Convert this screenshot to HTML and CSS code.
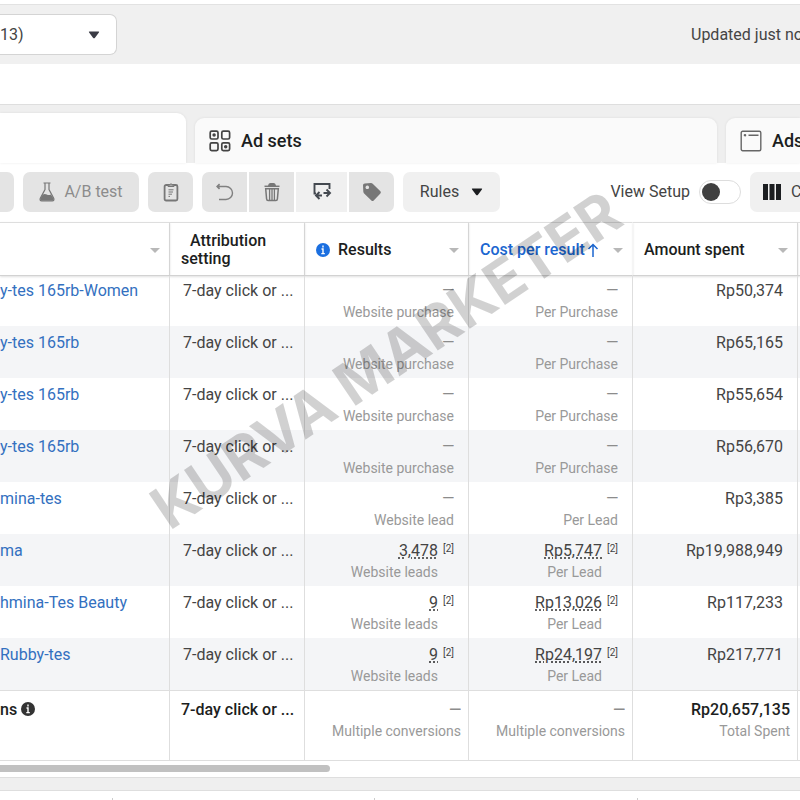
FILE: index.html
```html
<!DOCTYPE html>
<html lang="en">
<head>
	<meta charset="UTF-8">
	<meta name="viewport" content="width=device-width, initial-scale=1">
	<title>Ads Manager</title>
	<link rel="stylesheet" href="styles.css">
</head>
<body>
	<header class="topbar">
		<button class="account" type="button">
			<span>13)</span>
			<svg class="caret" viewBox="0 0 12 8"><path d="M1.500 0.500h9q1.200 0 .4 1L7 6.800q-1 1-2 0L1.100 1.500q-.8-1 .4-1z"/></svg>
		</button>
		<span class="updated">Updated just now</span>
	</header>
	<div class="filterbar"></div>

	<nav class="tabs">
		<a class="tab tab-active" href="#campaigns" aria-label="Campaigns"></a>
		<a class="tab tab-adsets" href="#adsets">
			<svg class="tab-icon" viewBox="0 0 22 22" fill="none" stroke="#444" stroke-width="1.700">
				<rect x="1.200" y="1.200" width="7.800" height="7.800" rx="1.500"/>
				<rect x="12.800" y="1.200" width="7.800" height="7.800" rx="1.500"/>
				<rect x="1.200" y="12.800" width="7.800" height="7.800" rx="1.500"/>
				<rect x="12.800" y="12.800" width="7.800" height="7.800" rx="1.500"/>
				<circle cx="5.100" cy="5.100" r=".9"/>
				<circle cx="16.700" cy="16.700" r=".9"/>
			</svg>
			<span>Ad sets</span>
		</a>
		<a class="tab tab-ads" href="#ads">
			<svg class="tab-icon" viewBox="0 0 22 22" fill="none" stroke="#666" stroke-width="1.400">
				<rect x="1.200" y="1.200" width="19.600" height="19.600" rx="1.500"/>
				<path d="M8.500 5.200h10"/>
				<circle cx="5" cy="5.200" r=".6"/>
			</svg>
			<span>Ads</span>
		</a>
	</nav>

	<div class="toolbar">
		<button class="btn btn-cut" type="button" disabled aria-label="Edit"></button>
		<button class="btn btn-test" type="button" disabled>
			<svg class="icon-flask" viewBox="0 0 16 20">
				<path d="M4.500 1h7M6 1v6.500L1.300 16.200q-.9 2.500 1.500 2.800h10.400q2.400-.3 1.500-2.800L10 7.500V1" fill="none" stroke="#777" stroke-width="1.200"/>
				<path d="M3.800 12.500q2-1.200 4 0t4 0l2.800 4.100q.5 2-1.400 2.200H2.800q-1.900-.2-1.400-2.200z" fill="#777"/>
			</svg>
			<span>A/B test</span>
		</button>
		<button class="btn btn-icon btn-clip" type="button" disabled aria-label="Duplicate">
			<svg viewBox="0 0 20 20" fill="none" stroke="#777" stroke-width="1.800">
				<rect x="3.600" y="3" width="12.800" height="15.500" rx="1.500"/>
				<path d="M7 4.500V3h1.500q1.500-2.600 3 0H13v1.500z" fill="#aaa" stroke-width="1"/>
				<path d="M7.500 7.800h5M7.500 10h4.500M7.500 12.200h3.500M7.500 14.400h1.500" stroke-width="1"/>
			</svg>
		</button>
		<div class="group">
			<button class="btn btn-icon" type="button" disabled aria-label="Undo">
				<svg viewBox="0 0 20 20" fill="none" stroke="#808080" stroke-width="1.400">
					<path d="M4.500 2L2 4.500 4.500 7" fill="#808080"/>
					<path d="M2.500 4.500H11a6.500 6.500 0 0 1 0 13H4"/>
				</svg>
			</button>
			<button class="btn btn-icon" type="button" disabled aria-label="Delete">
				<svg viewBox="0 0 20 20" fill="none" stroke="#777" stroke-width="1.500">
					<path d="M2.500 4.300h15"/>
					<path d="M6 4q.4-3 2.500-3h3q2.100 0 2.500 3z" fill="#777" stroke="none"/>
					<path d="M3.700 6.700l.9 10.300q.1 1.500 1.500 1.500h7.800q1.400 0 1.500-1.500l.9-10.300z"/>
					<path d="M7.600 7v11M10 7v11M12.400 7v11" stroke-width="1.300"/>
				</svg>
			</button>
			<button class="btn btn-icon btn-live" type="button" aria-label="Move">
				<svg viewBox="0 0 20 20" fill="none" stroke="#444950" stroke-width="1.900">
					<path d="M4 11.500H2.500V2h15v5"/>
					<path d="M7.500 10L4 13.500 7.500 17M4 13.500h6M14.500 7.500L18 11l-3.500 3.500M11.500 11H18"/>
				</svg>
			</button>
			<button class="btn btn-icon" type="button" disabled aria-label="Tag">
				<svg viewBox="0 0 20 20" fill="#777">
					<path fill-rule="evenodd" d="M1 3.200Q1 1.500 2.700 1.500L9 1q1 0 1.700.7l7.700 7.600q1 1.100 0 2.200l-6.700 6.900q-1.200 1-2.300 0L1.900 11.200q-.6-.7-.6-1.600zM5.300 3.500a1.800 1.800 0 1 0 .01 0z"/>
				</svg>
			</button>
		</div>
		<button class="btn btn-rules" type="button">
			<span>Rules</span>
			<svg class="caret" viewBox="0 0 12 8"><path d="M1.500 0.500h9q1.200 0 .4 1L7 6.800q-1 1-2 0L1.100 1.500q-.8-1 .4-1z"/></svg>
		</button>
		<label class="setup" for="setup">View Setup</label>
		<input class="switch" id="setup" type="checkbox" role="switch">
		<button class="btn btn-columns" type="button">
			<svg viewBox="0 0 18 16" fill="#1c1e21"><path d="M0 0h5v16H0zM6.500 0h5v16h-5zM13 0h5v16h-5z"/></svg>
			<span>Columns</span>
		</button>
	</div>

	<div class="grid">
		<table class="report">
			<colgroup>
				<col class="col-name">
				<col class="col-attr">
				<col class="col-metric">
				<col class="col-metric">
				<col class="col-spent">
				<col>
			</colgroup>
			<thead>
				<tr>
					<th><div class="head"><i class="sort"></i></div></th>
					<th class="th-attr">Attribution setting</th>
					<th>
						<div class="head head-results">
							<svg class="info" viewBox="0 0 14 14"><circle cx="7" cy="7" r="7" fill="#1b6fe0"/><path d="M7 2.500v2M5.500 6H7v4.500M5.300 10.600h3.500" stroke="#fff" stroke-width="1.400" fill="none"/></svg>
							<span>Results</span>
							<i class="sort"></i>
						</div>
					</th>
					<th class="th-open">
						<div class="head head-cost">
							<span>Cost per result</span>
							<svg class="arrow" viewBox="0 0 12 14" fill="none" stroke="#1b66d0" stroke-width="1.500"><path d="M6 14V1.500M1.500 6L6 1.500 10.500 6"/></svg>
							<i class="sort"></i>
						</div>
					</th>
					<th>
						<div class="head">
							<span>Amount spent</span>
							<i class="sort"></i>
						</div>
					</th>
					<th></th>
				</tr>
			</thead>
			<tbody>
				<tr>
					<td><a href="#c1">y-tes 165rb-Women</a></td>
					<td class="attr">7-day click or ...</td>
					<td class="num"><span class="none">—</span><small>Website purchase</small></td>
					<td class="num"><span class="none">—</span><small>Per Purchase</small></td>
					<td class="num">Rp50,374</td>
					<td></td>
				</tr>
				<tr>
					<td><a href="#c2">y-tes 165rb</a></td>
					<td class="attr">7-day click or ...</td>
					<td class="num"><span class="none">—</span><small>Website purchase</small></td>
					<td class="num"><span class="none">—</span><small>Per Purchase</small></td>
					<td class="num">Rp65,165</td>
					<td></td>
				</tr>
				<tr>
					<td><a href="#c3">y-tes 165rb</a></td>
					<td class="attr">7-day click or ...</td>
					<td class="num"><span class="none">—</span><small>Website purchase</small></td>
					<td class="num"><span class="none">—</span><small>Per Purchase</small></td>
					<td class="num">Rp55,654</td>
					<td></td>
				</tr>
				<tr>
					<td><a href="#c4">y-tes 165rb</a></td>
					<td class="attr">7-day click or ...</td>
					<td class="num"><span class="none">—</span><small>Website purchase</small></td>
					<td class="num"><span class="none">—</span><small>Per Purchase</small></td>
					<td class="num">Rp56,670</td>
					<td></td>
				</tr>
				<tr>
					<td><a href="#c5">mina-tes</a></td>
					<td class="attr">7-day click or ...</td>
					<td class="num"><span class="none">—</span><small>Website lead</small></td>
					<td class="num"><span class="none">—</span><small>Per Lead</small></td>
					<td class="num">Rp3,385</td>
					<td></td>
				</tr>
				<tr>
					<td><a href="#c6">ma</a></td>
					<td class="attr">7-day click or ...</td>
					<td class="num noted"><span class="value">3,478</span><sup>[2]</sup><small>Website leads</small></td>
					<td class="num noted"><span class="value">Rp5,747</span><sup>[2]</sup><small>Per Lead</small></td>
					<td class="num">Rp19,988,949</td>
					<td></td>
				</tr>
				<tr>
					<td><a href="#c7">hmina-Tes Beauty</a></td>
					<td class="attr">7-day click or ...</td>
					<td class="num noted"><span class="value">9</span><sup>[2]</sup><small>Website leads</small></td>
					<td class="num noted"><span class="value">Rp13,026</span><sup>[2]</sup><small>Per Lead</small></td>
					<td class="num">Rp117,233</td>
					<td></td>
				</tr>
				<tr>
					<td><a href="#c8">Rubby-tes</a></td>
					<td class="attr">7-day click or ...</td>
					<td class="num noted"><span class="value">9</span><sup>[2]</sup><small>Website leads</small></td>
					<td class="num noted"><span class="value">Rp24,197</span><sup>[2]</sup><small>Per Lead</small></td>
					<td class="num">Rp217,771</td>
					<td></td>
				</tr>
			</tbody>
			<tfoot>
				<tr>
					<td>ns <svg class="info" viewBox="0 0 14 14"><circle cx="7" cy="7" r="7" fill="#333"/><path d="M7 2.500v2M5.500 6H7v4.500M5.300 10.600h3.500" stroke="#fff" stroke-width="1.400" fill="none"/></svg></td>
					<td>7-day click or ...</td>
					<td class="num"><span class="none">—</span><small>Multiple conversions</small></td>
					<td class="num"><span class="none">—</span><small>Multiple conversions</small></td>
					<td class="num">Rp20,657,135<small>Total Spent</small></td>
					<td></td>
				</tr>
			</tfoot>
		</table>
		<div class="scroll"><div class="thumb"></div></div>
		<div class="watermark">KURVA MARKETER</div>
	</div>

	<div class="divider"></div>
	<div class="panel"><i></i><i></i><i></i></div>
</body>
</html>
```
FILE: styles.css
```css
* {
	box-sizing: border-box;
}
body {
	margin: 0;
	background: #fff;
	color: #444;
	font: 16px/20px Roboto, sans-serif;
	overflow: hidden;
}
a {
	color: #3370c0;
	text-decoration: none;
}
button {
	font: inherit;
	color: inherit;
	border: 0;
	padding: 0;
}
svg {
	display: block;
	flex: none;
}
.caret {
	width: 12px;
	height: 8px;
	fill: #3a3b45;
}

/* top bar */
.topbar {
	display: flex;
	justify-content: space-between;
	align-items: center;
	height: 60px;
	margin-top: 4px;
	border-top: 1px solid #e2e2e2;
	background: #f0f0f0;
	white-space: nowrap;
}
.account {
	display: flex;
	justify-content: space-between;
	align-items: center;
	width: 117px;
	height: 41px;
	padding-right: 16px;
	background: #fff;
	border: 1px solid #d4d4d4;
	border-left: 0;
	border-radius: 0 7px 7px 0;
}
.updated {
	width: 109px;
}
.filterbar {
	height: 41px;
	border-bottom: 1px solid #dedede;
}

/* tabs */
.tabs {
	display: flex;
	align-items: flex-end;
	gap: 9px;
	height: 58px;
	background: #efefef;
}
.tab {
	display: flex;
	align-items: center;
	gap: 10px;
	height: 45px;
	padding-left: 14px;
	background: #fafafa;
	border-radius: 9px 9px 0 0;
	box-shadow: 0 0 3px rgba(0, 0, 0, .08);
	color: #1c1e21;
	font-size: 18px;
	font-weight: 500;
	white-space: nowrap;
}
.tab-active {
	width: 186px;
	height: 50px;
	padding: 0;
	background: #fff;
	border-radius: 0 9px 0 0;
}
.tab-adsets {
	flex: 1;
}
.tab-ads {
	width: 74px;
	border-top-right-radius: 0;
	overflow: hidden;
}
.tab-icon {
	width: 22px;
	height: 22px;
}

/* toolbar */
.toolbar {
	display: flex;
	align-items: center;
	height: 59px;
	padding-bottom: 1px;
	white-space: nowrap;
	overflow: hidden;
}
.btn {
	display: flex;
	align-items: center;
	justify-content: center;
	flex: none;
	height: 40px;
	background: #f0f0f0;
	border-radius: 7px;
}
.btn:disabled {
	background: #e4e4e4;
	color: #8c8c8c;
}
.btn-cut {
	width: 14px;
	margin-right: 9px;
	border-radius: 0 7px 7px 0;
}
.btn-test {
	width: 116px;
	gap: 9px;
	margin-right: 9px;
}
.icon-flask {
	width: 16px;
	height: 20px;
}
.btn-icon {
	width: 45px;
}
.btn-icon svg {
	width: 20px;
	height: 20px;
}
.btn-clip {
	margin-right: 9px;
}
.group {
	display: flex;
	gap: 2px;
	margin-right: 9px;
}
.group .btn {
	border-radius: 0;
}
.group .btn:first-child {
	border-radius: 7px 0 0 7px;
}
.group .btn:last-child {
	border-radius: 0 7px 7px 0;
}
.group .btn-live {
	width: 51px;
}
.btn-rules {
	width: 97px;
	gap: 12px;
}
.btn-rules .caret {
	fill: #1c1e21;
}
.setup {
	margin-left: auto;
	margin-right: 9px;
}
.switch {
	appearance: none;
	flex: none;
	width: 42px;
	height: 24px;
	margin: 0 9px 0 0;
	padding: 2px;
	border: 1px solid #ddd;
	border-radius: 12px;
	background: #fff;
}
.switch::before {
	content: "";
	display: block;
	width: 18px;
	height: 18px;
	border-radius: 50%;
	background: #404040;
}
.switch:checked::before {
	margin-left: auto;
}
.btn-columns {
	justify-content: flex-start;
	gap: 10px;
	width: 50px;
	padding-left: 13px;
	border-radius: 7px 0 0 7px;
	overflow: hidden;
}
.btn-columns svg {
	width: 18px;
	height: 16px;
}

/* report */
.grid {
	position: relative;
}
.report {
	width: 100%;
	table-layout: fixed;
	border-spacing: 0;
	white-space: nowrap;
}
.col-name {
	width: 170px;
}
.col-attr {
	width: 135px;
}
.col-metric {
	width: 164px;
}
.col-spent {
	width: 165px;
}
th {
	height: 54px;
	padding: 2px 9px 0 11px;
	border-top: 1px solid #dedede;
	border-right: 1px solid #dedede;
	border-bottom: 1px solid #d2d2d2;
	box-shadow: 0 1px 2px rgba(0, 0, 0, .12);
	color: #1c1e21;
	font-weight: 500;
	text-align: left;
}
.th-open {
	border-right-color: transparent;
}
th:last-child,
td:last-child {
	padding: 0;
	border-right: 0;
}
.th-attr {
	line-height: 18px;
	text-indent: 9px;
	white-space: normal;
}
.head {
	display: flex;
	align-items: center;
}
.head-results {
	gap: 8px;
}
.head-cost {
	gap: 2px;
	color: #1b66d0;
}
.info {
	width: 14px;
	height: 14px;
}
.arrow {
	width: 12px;
	height: 14px;
}
.sort {
	margin-left: auto;
	border: 5px solid transparent;
	border-top-color: #b8b8b8;
	border-bottom: 0;
}
td {
	height: 52px;
	padding: 7px 14px 0 0;
	border-right: 1px solid #dedede;
	vertical-align: top;
}
tbody tr:first-child td {
	height: 50px;
	padding-top: 5px;
}
tbody tr:nth-child(even) td {
	background: #f4f5f7;
}
.attr {
	padding-left: 13px;
}
.num {
	text-align: right;
}
.none {
	display: inline-block;
	width: 12px;
	overflow: hidden;
	vertical-align: top;
	color: #8c8c8c;
}
small {
	display: block;
	margin-top: 1px;
	color: #999;
	font-size: 14px;
}
.value {
	text-decoration: underline dotted #333;
	text-underline-offset: 2px;
}
sup {
	display: inline-block;
	width: 16px;
	font-size: 10px;
	line-height: 16px;
	vertical-align: top;
}
.noted small {
	margin-right: 16px;
}
tfoot td {
	height: 71px;
	padding: 9px 7px 0 0;
	border-top: 1px solid #dedede;
	border-bottom: 1px solid #dedede;
	color: #1c1e21;
	font-weight: 500;
}
tfoot td + td {
	padding-left: 11px;
}
tfoot small {
	font-weight: 400;
}
tfoot .info {
	display: inline-block;
	vertical-align: -1px;
}
.scroll {
	height: 16px;
	padding-top: 4px;
}
.thumb {
	width: 330px;
	height: 7px;
	background: #c1c1c1;
	border-radius: 0 4px 4px 0;
}
.watermark {
	position: absolute;
	left: 50%;
	top: 138px;
	transform: translate(-50%, -50%) rotate(-34deg);
	margin-left: -14px;
	color: rgba(0, 0, 0, .18);
	font: bold 59px/60px Inter, sans-serif;
	white-space: nowrap;
	pointer-events: none;
}

.divider {
	height: 14px;
	background: #efefef;
	border-top: 1px solid #dedede;
	border-bottom: 1px solid #dedede;
}
.panel {
	display: flex;
	gap: 38%;
	height: 10px;
	padding: 7px 0 0 14%;
}
.panel i {
	flex: none;
	width: 1px;
	background: #ccc;
}
```
